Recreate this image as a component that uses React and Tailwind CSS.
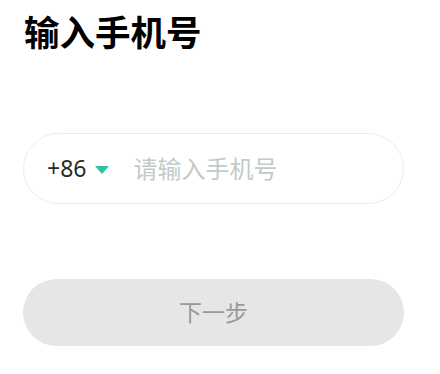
import React, { useState } from "react";

const PhoneLogin = () => {
  const [phone, setPhone] = useState("");

  return (
    <div
      className="w-[440px] h-[374px] bg-white pl-[23px]"
      style={{ fontFamily: '"Noto Sans", "Noto Sans CJK SC", sans-serif' }}
    >
      <h1 className="pt-[15px] pl-[1px] text-[35.5px] leading-[35px] font-bold text-black">
        输入手机号
      </h1>

      <div className="mt-[83px] w-[381px] h-[71px] rounded-full border border-[#ececec] flex items-center pl-[23px]">
        <span className="shrink-0 text-[23px] text-[#2a2a2a]">+86</span>
        <svg
          width="14"
          height="8"
          viewBox="0 0 14 8"
          className="shrink-0 ml-[9px] mt-[2px]"
        >
          <path d="M0 0 H14 L7 8 Z" fill="#2ec4a0" />
        </svg>
        <input
          type="tel"
          value={phone}
          onChange={(e) => setPhone(e.target.value)}
          placeholder="请输入手机号"
          className="ml-[24px] min-w-0 flex-1 bg-transparent outline-none text-[24px] text-[#222] placeholder:text-[#c2caca]"
        />
      </div>

      <button
        type="button"
        disabled={phone.length === 0}
        className="mt-[75px] w-[381px] h-[67px] rounded-full bg-[#e6e6e6] text-[23px] text-[#999] flex items-center justify-center"
      >
        下一步
      </button>
    </div>
  );
};

export default function App() {
  return <PhoneLogin />;
}
